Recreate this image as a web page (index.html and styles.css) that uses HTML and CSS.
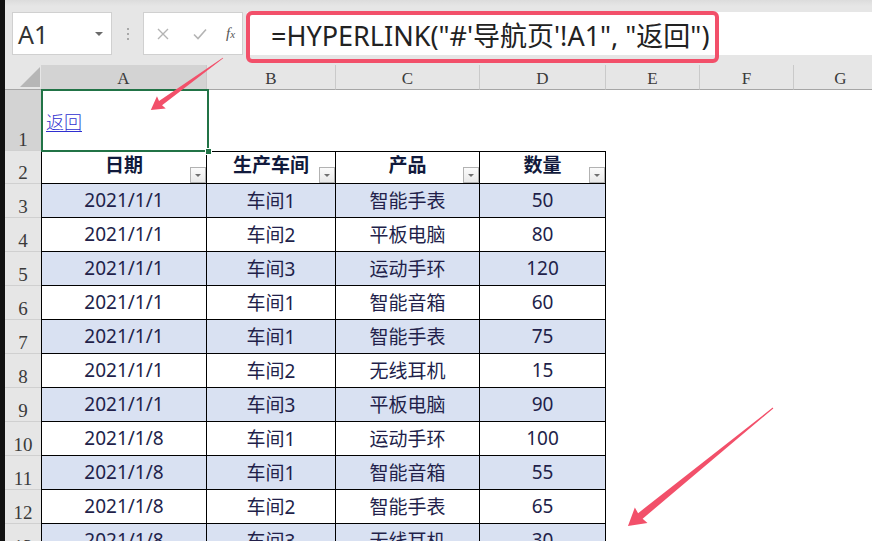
FILE: index.html
```html
<!DOCTYPE html>
<html lang="zh-CN">
<head>
<meta charset="utf-8">
<title>HYPERLINK 返回</title>
<link rel="stylesheet" href="styles.css">
</head>
<body>
<div class="app">
  <div class="edge"></div>
  <div class="main">
    <div class="toolbar">
      <div class="namebox"><span class="ref">A1</span><span class="caret"></span></div>
      <div class="grip"><i></i><i></i><i></i></div>
      <div class="fbtns">
        <svg class="ico" width="14" height="14" viewBox="0 0 14 14"><path d="M2 2 L12 12 M12 2 L2 12" stroke="#b4b4b4" stroke-width="1.4" fill="none"/></svg>
        <svg class="ico" width="16" height="14" viewBox="0 0 16 14"><path d="M2 7.5 L6 11.5 L14 2.5" stroke="#b4b4b4" stroke-width="1.6" fill="none"/></svg>
        <span class="fx"><i>f</i><i class="sx">x</i></span>
      </div>
      <div class="fbar">=HYPERLINK("#'导航页'!A1", "返回")</div>
    </div>
    <div class="sheet">
      <div class="corner"><span class="tri"></span></div>
      <div class="ch on">A</div><div class="ch">B</div><div class="ch">C</div><div class="ch">D</div><div class="ch">E</div><div class="ch">F</div><div class="ch">G</div>

      <div class="rh on">1</div>
      <div class="c a1"><a class="link" href="#">返回</a><span class="selbox"></span><span class="handle"></span></div>
      <div class="c"></div><div class="c"></div><div class="c"></div><div class="c"></div><div class="c"></div><div class="c"></div>

      <div class="rh">2</div>
      <div class="t l hd">日期<span class="flt"></span></div>
      <div class="t hd">生产车间<span class="flt"></span></div>
      <div class="t hd">产品<span class="flt"></span></div>
      <div class="t hd">数量<span class="flt"></span></div>
      <div class="c"></div><div class="c"></div><div class="c"></div>

      <div class="rh">3</div>
      <div class="t l band">2021/1/1</div><div class="t band">车间1</div><div class="t band">智能手表</div><div class="t band">50</div>
      <div class="c"></div><div class="c"></div><div class="c"></div>

      <div class="rh">4</div>
      <div class="t l">2021/1/1</div><div class="t">车间2</div><div class="t">平板电脑</div><div class="t">80</div>
      <div class="c"></div><div class="c"></div><div class="c"></div>

      <div class="rh">5</div>
      <div class="t l band">2021/1/1</div><div class="t band">车间3</div><div class="t band">运动手环</div><div class="t band">120</div>
      <div class="c"></div><div class="c"></div><div class="c"></div>

      <div class="rh">6</div>
      <div class="t l">2021/1/1</div><div class="t">车间1</div><div class="t">智能音箱</div><div class="t">60</div>
      <div class="c"></div><div class="c"></div><div class="c"></div>

      <div class="rh">7</div>
      <div class="t l band">2021/1/1</div><div class="t band">车间1</div><div class="t band">智能手表</div><div class="t band">75</div>
      <div class="c"></div><div class="c"></div><div class="c"></div>

      <div class="rh">8</div>
      <div class="t l">2021/1/1</div><div class="t">车间2</div><div class="t">无线耳机</div><div class="t">15</div>
      <div class="c"></div><div class="c"></div><div class="c"></div>

      <div class="rh">9</div>
      <div class="t l band">2021/1/1</div><div class="t band">车间3</div><div class="t band">平板电脑</div><div class="t band">90</div>
      <div class="c"></div><div class="c"></div><div class="c"></div>

      <div class="rh">10</div>
      <div class="t l">2021/1/8</div><div class="t">车间1</div><div class="t">运动手环</div><div class="t">100</div>
      <div class="c"></div><div class="c"></div><div class="c"></div>

      <div class="rh">11</div>
      <div class="t l band">2021/1/8</div><div class="t band">车间1</div><div class="t band">智能音箱</div><div class="t band">55</div>
      <div class="c"></div><div class="c"></div><div class="c"></div>

      <div class="rh">12</div>
      <div class="t l">2021/1/8</div><div class="t">车间2</div><div class="t">智能手表</div><div class="t">65</div>
      <div class="c"></div><div class="c"></div><div class="c"></div>

      <div class="rh">13</div>
      <div class="t l band">2021/1/8</div><div class="t band">车间3</div><div class="t band">无线耳机</div><div class="t band">30</div>
      <div class="c"></div><div class="c"></div><div class="c"></div>
    </div>
  </div>
  <div class="callout"></div>
  <svg class="arrows" width="872" height="541" viewBox="0 0 872 541">
    <g transform="translate(223 58) rotate(144.2)">
      <polygon points="0,-0.4 77,-2.6 76,-7.5 89,0 76,7.5 77,2.6 0,0.4" fill="#f2506a"/>
    </g>
    <g transform="translate(773 408) rotate(140.86)">
      <polygon points="0,-0.5 171,-3.6 170,-10 187,0 170,10 171,3.6 0,0.5" fill="#f2506a"/>
    </g>
  </svg>
</div>
</body>
</html>
```

FILE: styles.css
```css
* { box-sizing: border-box; }
html, body { margin: 0; padding: 0; }
body {
  width: 872px;
  height: 541px;
  overflow: hidden;
  background: #ffffff;
  font-family: "Noto Sans", "Noto Sans CJK SC", sans-serif;
}
.app {
  position: relative;
  display: flex;
  width: 872px;
  height: 541px;
  overflow: hidden;
}
.edge {
  flex: 0 0 5px;
  background: #111111;
}
.main {
  flex: 1 1 auto;
  display: flex;
  flex-direction: column;
  min-width: 0;
  overflow: hidden;
}

/* ---------- toolbar ---------- */
.toolbar {
  flex: 0 0 65px;
  display: flex;
  align-items: flex-start;
  padding-top: 12px;
  background: linear-gradient(#dcdcdc 0, #e6e6e6 6px, #e6e6e6 100%);
}
.namebox {
  margin-left: 7px;
  width: 100px;
  height: 43px;
  background: #ffffff;
  border: 1px solid #d0d0d0;
  display: flex;
  align-items: center;
  justify-content: space-between;
  padding: 0 8px 0 5px;
}
.ref {
  font-family: "Noto Sans", sans-serif;
  font-size: 25px;
  color: #333333;
}
.caret {
  width: 0;
  height: 0;
  border-left: 4px solid transparent;
  border-right: 4px solid transparent;
  border-top: 4px solid #6a6a6a;
  margin-top: 1px;
}
.grip {
  width: 31px;
  height: 43px;
  display: flex;
  flex-direction: column;
  align-items: center;
  justify-content: center;
  gap: 3px;
}
.grip i {
  display: block;
  width: 2px;
  height: 2px;
  background: #a8a8a8;
}
.fbtns {
  width: 100px;
  height: 43px;
  background: #ffffff;
  border: 1px solid #d0d0d0;
  display: flex;
  align-items: center;
  padding-left: 12px;
  gap: 22px;
}
.ico { display: block; }
.fx {
  font-family: "Liberation Serif", serif;
  font-size: 15px;
  color: #555555;
  margin-left: -4px;
}
.fx .sx { font-size: 11px; }
.fbar {
  flex: 1 1 auto;
  margin-left: 4px;
  height: 43px;
  background: #ffffff;
  display: flex;
  align-items: center;
  padding-left: 24px;
  padding-top: 1px;
  font-family: "Noto Sans", "Noto Sans CJK SC", sans-serif;
  font-size: 27px;
  color: #222222;
  white-space: nowrap;
}

/* ---------- sheet ---------- */
.sheet {
  display: grid;
  grid-template-columns: 36px 166px 129px 144px 126px 94px 94px 94px;
  grid-template-rows: 25px 61px 33px repeat(11, 34px);
  flex: 0 0 auto;
}
.corner {
  position: relative;
  background: #e6e6e6;
  border-bottom: 1px solid #a6a6a6;
}
.tri {
  position: absolute;
  right: 1px;
  bottom: 2px;
  width: 20px;
  height: 20px;
  background: #b6b6b6;
  clip-path: polygon(100% 0, 100% 100%, 0 100%);
}
.ch {
  background: #e6e6e6;
  border-right: 1px solid #cacaca;
  border-bottom: 1px solid #a6a6a6;
  display: flex;
  align-items: center;
  justify-content: center;
  padding-top: 3px;
  font-family: "Liberation Serif", serif;
  font-size: 17px;
  color: #3a3a3a;
}
.ch.on { background: #d3d3d3; }
.rh {
  background: #e6e6e6;
  border-bottom: 1px solid #d0d0d0;
  display: flex;
  align-items: flex-end;
  justify-content: center;
  padding-bottom: 0;
  line-height: 20px;
  font-family: "Liberation Serif", serif;
  font-size: 19px;
  color: #3a3a3a;
}
.rh.on { background: #d3d3d3; }
.c { background: #ffffff; }
.a1 {
  position: relative;
  z-index: 2;
  display: flex;
  align-items: center;
  padding-left: 5px;
  padding-top: 0;
}
.link {
  font-family: "Noto Sans CJK SC", sans-serif;
  font-weight: 300;
  font-size: 18px;
  color: #2f2fd0;
  text-decoration: underline;
  text-underline-offset: 2px;
}
.selbox {
  position: absolute;
  left: 0;
  top: -1px;
  right: -2px;
  bottom: -1px;
  border: 2px solid #217346;
}
.handle {
  position: absolute;
  right: -5px;
  bottom: -4px;
  width: 7px;
  height: 7px;
  background: #217346;
  border: 1px solid #ffffff;
}
.t {
  border-right: 1px solid #000000;
  border-bottom: 1px solid #000000;
  background: #ffffff;
  display: flex;
  align-items: center;
  justify-content: center;
  padding-bottom: 2px;
  font-family: "Noto Sans", "Noto Sans CJK SC", sans-serif;
  font-size: 19px;
  color: #221f4a;
  white-space: nowrap;
}
.t.l { border-left: 1px solid #000000; }
.t.band { background: #d9e1f2; }
.t.hd {
  position: relative;
  border-top: 1px solid #000000;
  font-weight: 700;
  color: #111a3c;
  padding-bottom: 8px;
  font-family: "Noto Sans CJK SC", sans-serif;
}
.flt {
  position: absolute;
  right: 0;
  bottom: 0;
  width: 16px;
  height: 16px;
  border: 1px solid #b2b2b2;
  background: linear-gradient(#fbfbfb, #e9e9e9);
}
.flt::after {
  content: "";
  position: absolute;
  left: 4px;
  top: 6px;
  width: 0;
  height: 0;
  border-left: 3.5px solid transparent;
  border-right: 3.5px solid transparent;
  border-top: 3.5px solid #707070;
}

/* ---------- annotations ---------- */
.callout {
  position: absolute;
  z-index: 5;
  left: 246px;
  top: 11px;
  width: 473px;
  height: 52px;
  border: 4px solid #f2506a;
  border-radius: 6px;
  pointer-events: none;
}
.arrows {
  position: absolute;
  z-index: 5;
  left: 0;
  top: 0;
  pointer-events: none;
}
```
